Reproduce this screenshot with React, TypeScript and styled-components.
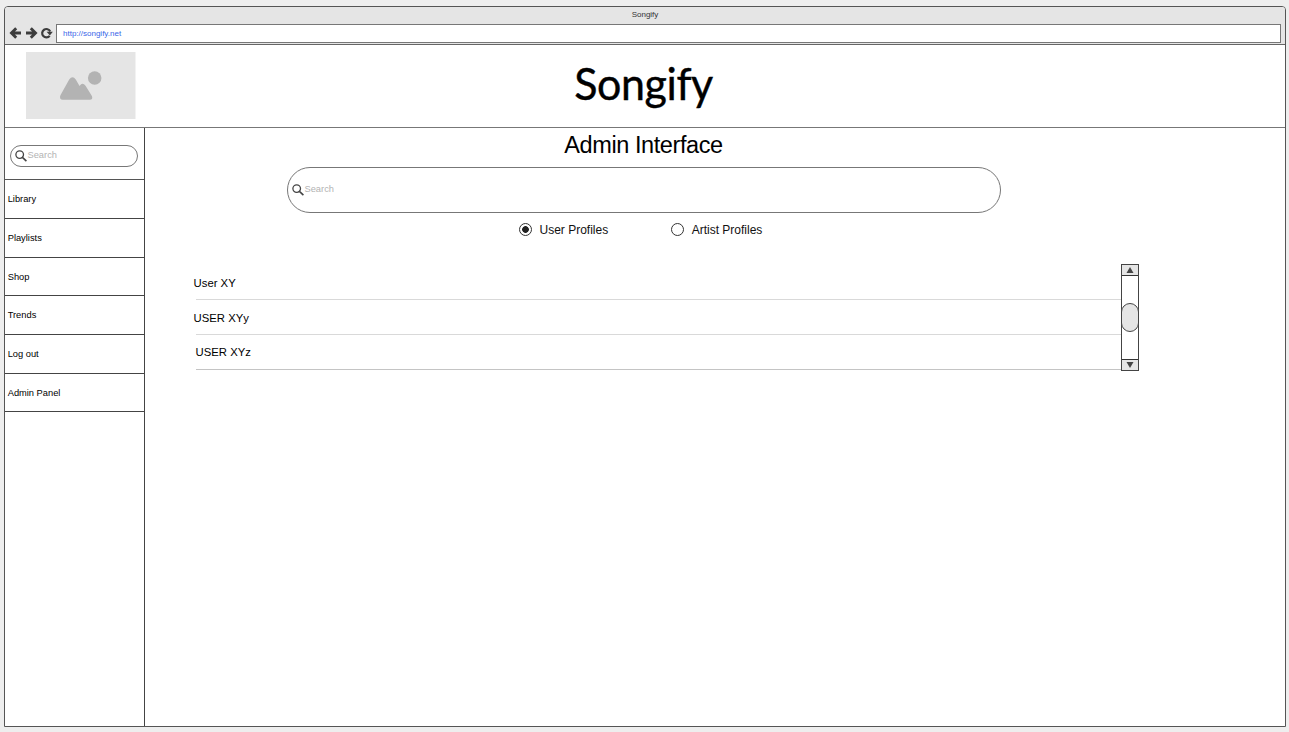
import React from "react";
import styled, { createGlobalStyle } from "styled-components";

const Global = createGlobalStyle`
  *, *::before, *::after { box-sizing: border-box; }
  html, body { margin: 0; padding: 0; }
  body {
    background: #eee;
    font-family: "Liberation Sans", Arial, sans-serif;
    color: #000;
    overflow: hidden;
  }
`;

const Page = styled.div`
  height: 732px;
  padding: 6px 3px 5px 4px;
`;

const Browser = styled.div`
  display: flex;
  flex-direction: column;
  width: 1282px;
  height: 721px;
  border: 1px solid #555;
  border-radius: 4px 4px 0 0;
  background: #fff;
`;

const Chrome = styled.div`
  height: 38px;
  background: #e5e5e5;
  border-bottom: 1px solid #666;
  border-radius: 3px 3px 0 0;
`;

const WindowTitle = styled.div`
  height: 17px;
  line-height: 15px;
  font-size: 8px;
  text-align: center;
  color: #333;
`;

const AddressRow = styled.div`
  display: flex;
  align-items: center;
  height: 19px;
  padding: 0 4px 0 4px;
`;

const NavIcons = styled.svg`
  width: 47px;
  height: 19px;
  flex: none;
`;

const AddressField = styled.div`
  flex: 1;
  height: 19px;
  padding-left: 6px;
  border: 1px solid #777;
  background: #fff;
  color: #3a66e8;
  font-size: 8px;
  line-height: 17px;
`;

const Header = styled.header`
  display: grid;
  grid-template-columns: 132px 1fr 132px;
  align-items: start;
  height: 83px;
  border-bottom: 1px solid #777;
`;

const Placeholder = styled.svg`
  display: block;
  width: 109.5px;
  height: 67px;
  margin: 7px 0 0 21px;
`;

const Brand = styled.h1`
  margin: 12px 0 0 -3px;
  font-family: "Lato", sans-serif;
  font-size: 43px;
  font-weight: 400;
  line-height: 52px;
  letter-spacing: -0.4px;
  text-align: center;
  -webkit-text-stroke: 0.4px #000;
  transform: scaleY(1.05);
`;

const Body = styled.div`
  display: flex;
  flex: 1;
`;

const Sidebar = styled.aside`
  width: 140px;
  border-right: 1px solid #444;
`;

const SidebarSearch = styled.div`
  height: 52.4px;
  padding: 17px 6px 0 5px;
  border-bottom: 1px solid #555;
`;

const SearchField = styled.div<{ $large?: boolean }>`
  display: flex;
  align-items: center;
  width: ${(p) => (p.$large ? "714px" : "128px")};
  height: ${(p) => (p.$large ? "46px" : "22px")};
  padding: 0 3.5px;
  border: 1px solid #777;
  border-radius: 23px;
  color: #b3b3b3;
  font-size: 9.3px;
  line-height: 12px;
  svg { flex: none; margin-right: 1px; }
  span { padding-bottom: 2px; }
`;

const NavItem = styled.a`
  display: flex;
  align-items: center;
  height: 38.67px;
  padding-left: 2.7px;
  border-bottom: 1px solid #444;
  font-size: 9.3px;
`;

const Main = styled.main`
  flex: 1;
`;

const Title = styled.h2`
  margin: 2px 0 0;
  padding-right: 143px;
  font-size: 23.5px;
  font-weight: 400;
  line-height: 31px;
  letter-spacing: -0.42px;
  text-align: center;
`;

const MainSearch = styled.div`
  padding: 6px 0 0 142px;
`;

const RadioGroup = styled.div`
  display: flex;
  gap: 63px;
  padding: 9px 0 0 374px;
`;

const RadioOption = styled.label`
  display: flex;
  align-items: flex-start;
  gap: 7.5px;
  height: 16px;
  padding-top: 1px;
  font-size: 12px;
  line-height: 15px;
  color: #111;
`;

const RadioDot = styled.span<{ $checked?: boolean }>`
  width: 13px;
  height: 13px;
  border: 1px solid #333;
  border-radius: 50%;
  background: ${(p) =>
    p.$checked ? "radial-gradient(circle, #222 3px, #fff 3.7px)" : "#fff"};
`;

const ListPanel = styled.section`
  display: flex;
  width: 946px;
  height: 107px;
  margin: 26px 0 0 48px;
`;

const Rows = styled.div`
  flex: 1;
  padding-top: 1px;
`;

const Row = styled.div<{ $indent?: number; $last?: boolean }>`
  height: 35px;
  margin-left: 3px;
  border-bottom: 1px solid ${(p) => (p.$last ? "#c4c4c4" : "#d9d9d9")};
  font-size: 11.3px;
  line-height: ${(p) => (p.$last ? "34px" : "36px")};
  span { margin-left: ${(p) => p.$indent ?? -2.4}px; }
`;

const Scrollbar = styled.div`
  display: flex;
  flex-direction: column;
  width: 18px;
  border: 1px solid #444;
  background: #fff;
`;

const ScrollButton = styled.div<{ $bottom?: boolean }>`
  display: flex;
  align-items: center;
  justify-content: center;
  height: 11px;
  background: #e5e5e5;
  border-${(p) => (p.$bottom ? "top" : "bottom")}: 1px solid #333;
`;

const ScrollTrack = styled.div`
  flex: 1;
  padding-top: 27px;
`;

const ScrollThumb = styled.div`
  width: 18px;
  height: 29px;
  margin-left: -1px;
  border: 1px solid #444;
  border-radius: 9px;
  background: #e5e5e5;
`;

const SearchIcon = () => (
  <svg width="12" height="12" viewBox="0 0 12 12" fill="none" stroke="#444">
    <circle cx="4.7" cy="4.6" r="3.8" strokeWidth="1.3" />
    <path d="M7.4 7.4 11.4 11.2" strokeWidth="1.6" />
  </svg>
);

const navItems = ["Library", "Playlists", "Shop", "Trends", "Log out", "Admin Panel"];

export default function App() {
  return (
    <Page>
      <Global />
      <Browser>
        <Chrome>
          <WindowTitle>Songify</WindowTitle>
          <AddressRow>
            <NavIcons viewBox="4 0 47 19" fill="none" stroke="#3d3d3d">
              <path d="M16 9H7M11.2 4.3 6.5 9l4.7 4.7" strokeWidth="2.9" />
              <path d="M21 9h9M25.8 4.3 30.5 9l-4.7 4.7" strokeWidth="2.9" />
              <path d="M44.7 11.8A4.2 4.2 0 1 1 45.2 7.5" strokeWidth="2.2" />
              <path d="M41.6 7.8h6.2L44.9 11.4z" fill="#3d3d3d" stroke="none" />
            </NavIcons>
            <AddressField>http://songify.net</AddressField>
          </AddressRow>
        </Chrome>
        <Header>
          <Placeholder viewBox="0 0 110 67" preserveAspectRatio="none">
            <path d="M0 0h110v67H0z" fill="#e5e5e5" />
            <circle cx="69" cy="26" r="6.8" fill="#b3b3b3" />
            <path
              d="M34.6 43.2 43.4 27.6Q46.7 22.8 50 27.6L53.8 34Q56.7 29.5 59.8 33.8L66.2 44Q67.5 47.4 64.2 47.8H37Q33 47.4 34.6 43.2Z"
              fill="#b3b3b3"
            />
          </Placeholder>
          <Brand>Songify</Brand>
        </Header>
        <Body>
          <Sidebar>
            <SidebarSearch>
              <SearchField>
                <SearchIcon />
                <span>Search</span>
              </SearchField>
            </SidebarSearch>
            {navItems.map((item) => (
              <NavItem key={item}>{item}</NavItem>
            ))}
          </Sidebar>
          <Main>
            <Title>Admin Interface</Title>
            <MainSearch>
              <SearchField $large>
                <SearchIcon />
                <span>Search</span>
              </SearchField>
            </MainSearch>
            <RadioGroup>
              <RadioOption>
                <RadioDot $checked />
                <span>User Profiles</span>
              </RadioOption>
              <RadioOption>
                <RadioDot />
                <span>Artist Profiles</span>
              </RadioOption>
            </RadioGroup>
            <ListPanel>
              <Rows>
                <Row><span>User XY</span></Row>
                <Row><span>USER XYy</span></Row>
                <Row $indent={-0.4} $last><span>USER XYz</span></Row>
              </Rows>
              <Scrollbar>
                <ScrollButton>
                  <svg width="8" height="6"><path d="M4 0 7.5 6h-7z" fill="#444" /></svg>
                </ScrollButton>
                <ScrollTrack><ScrollThumb /></ScrollTrack>
                <ScrollButton $bottom>
                  <svg width="8" height="6"><path d="M4 6 7.5 0h-7z" fill="#444" /></svg>
                </ScrollButton>
              </Scrollbar>
            </ListPanel>
          </Main>
        </Body>
      </Browser>
    </Page>
  );
}
